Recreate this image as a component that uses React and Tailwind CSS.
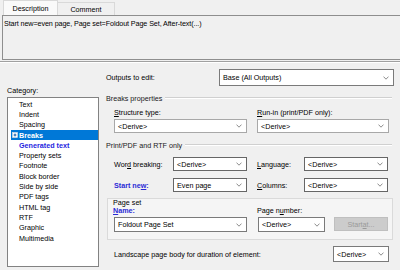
import clsx from "clsx";

const Chevron = () => (
  <svg width="6" height="4" viewBox="0 0 6 4" className="shrink-0">
    <polyline points="0.5,0.6 3,3.2 5.5,0.6" fill="none" stroke="#707070" strokeWidth="0.8" />
  </svg>
);

const Select = ({ value, className }) => (
  <div
    className={clsx(
      "flex shrink-0 items-center justify-between border border-[#7a7a7a] bg-white pl-[3px] pr-[4px]",
      className,
    )}
  >
    <span className="whitespace-nowrap">{value}</span>
    <Chevron />
  </div>
);

const GroupHeader = ({ children, className }) => (
  <div className={clsx("flex h-[10px] items-center", className)}>
    <span className="whitespace-nowrap text-[#1a1a1a]">{children}</span>
    <div className="ml-[3px] mr-[2px] flex-1 border-t border-[#d0d0d0] border-b border-b-white" />
  </div>
);

const categories = [
  { name: "Text" },
  { name: "Indent" },
  { name: "Spacing" },
  { name: "Breaks", selected: true },
  { name: "Generated text", blue: true },
  { name: "Property sets" },
  { name: "Footnote" },
  { name: "Block border" },
  { name: "Side by side" },
  { name: "PDF tags" },
  { name: "HTML tag" },
  { name: "RTF" },
  { name: "Graphic" },
  { name: "Multimedia" },
];

export default function App() {
  return (
    <div
      className="h-[270px] w-[400px] overflow-hidden bg-[#f0f0f0] text-[7.2px] leading-[9px] text-black"
      style={{ fontFamily: '"Liberation Sans", Arial, sans-serif' }}
    >
      {/* tabs */}
      <div className="flex h-[15px] items-end pl-[3px]">
        <div className="flex h-[15px] w-[55px] items-center justify-center border border-b-0 border-[#d9d9d9] bg-[#fafafa]">
          Description
        </div>
        <div className="flex h-[13px] w-[57px] items-center justify-center border border-b-0 border-l-0 border-[#d9d9d9] bg-[#f0f0f0]">
          Comment
        </div>
      </div>

      {/* description box */}
      <div className="ml-[2px] h-[45px] border border-r-0 border-[#8e8e8e] pl-[1px] pt-[3px]">
        <span className="whitespace-nowrap tracking-[-0.1px]">
          Start new=even page, Page set=Foldout Page Set, After-text(...)
        </span>
      </div>
      <div className="mt-[1px] h-px bg-[#a0a0a0]" />
      <div className="h-px bg-white" />

      <div className="flex">
        {/* left column */}
        <div className="ml-[7px] w-[92px]">
          <div className="mt-[23px] h-[9px]">Category:</div>
          <div className="mt-[2px] h-[170px] border border-[#828282] bg-white pt-px pl-[3px]">
            {categories.map((c) => (
              <div
                key={c.name}
                className={clsx(
                  "flex h-[10.3px] items-center",
                  c.selected && "bg-[#0078d7] font-bold text-white",
                  c.blue && "font-bold text-[#1f1fe0]",
                )}
              >
                <div className="flex w-[8px] justify-center">
                  {c.selected && (
                    <svg width="6" height="6" viewBox="0 0 6 6">
                      <rect x="0.5" y="0.5" width="5" height="5" fill="#fff" stroke="#e0e0e0" strokeWidth="0.6" />
                      <path d="M1.6 3H4.4M3 1.6V4.4" stroke="#0050a0" strokeWidth="0.9" />
                    </svg>
                  )}
                </div>
                <span className="whitespace-nowrap">{c.name}</span>
              </div>
            ))}
          </div>
        </div>

        {/* right column */}
        <div className="ml-[7px] w-[288px]">
          <div className="mt-[6px] flex h-[17px] items-center">
            <span>Outputs to edit:</span>
            <Select value="Base (All Outputs)" className="ml-auto h-[17px] w-[175px]" />
          </div>

          <GroupHeader className="mt-[7px]">Breaks properties</GroupHeader>

          <div className="ml-[8px] mt-[5px] flex">
            <div className="w-[143px]">
              <div className="h-[9px]">
                <span className="underline">S</span>tructure type:
              </div>
              <Select value="<Derive>" className="mt-[2px] h-[14px] w-[133px] border-[#a8a8a8]" />
            </div>
            <div>
              <div className="h-[9px]">
                <span className="underline">R</span>un-in (print/PDF only):
              </div>
              <Select value="<Derive>" className="mt-[2px] h-[14px] w-[132px] border-[#a8a8a8]" />
            </div>
          </div>

          <GroupHeader className="mt-[7px]">Print/PDF and RTF only</GroupHeader>

          <div className="ml-[8px] mt-[7px] flex h-[14px] items-center">
            <span className="w-[59px]">
              Wor<span className="underline">d</span> breaking:
            </span>
            <Select value="<Derive>" className="h-[14px] w-[74px] border-[#666]" />
            <span className="ml-[10px] w-[47px]">
              <span className="underline">L</span>anguage:
            </span>
            <Select value="<Derive>" className="h-[14px] w-[84px] border-[#666]" />
          </div>

          <div className="ml-[8px] mt-[7px] flex h-[14px] items-center">
            <span className="w-[59px] font-bold text-[#2b2bd6]">
              Start ne<span className="underline">w</span>:
            </span>
            <Select value="Even page" className="h-[14px] w-[74px] border-[#666]" />
            <span className="ml-[10px] w-[47px]">
              <span className="underline">C</span>olumns:
            </span>
            <Select value="<Derive>" className="h-[14px] w-[84px] border-[#666]" />
          </div>

          <div className="ml-px mt-[6px] h-[42px] w-[286px] border border-[#dadada] bg-[#f5f5f5] pl-[5px]">
            <div className="h-[8px] leading-[8px]">Page set</div>
            <div className="flex h-[8px] leading-[8px]">
              <span className="w-[144px] font-bold text-[#2b2bd6]">
                <span className="underline">N</span>ame:
              </span>
              <span>
                Page n<span className="underline">u</span>mber:
              </span>
            </div>
            <div className="mt-[2px] flex">
              <Select value="Foldout Page Set" className="ml-px h-[15px] w-[133px]" />
              <Select value="<Derive>" className="ml-[11px] h-[15px] w-[67px]" />
              <div className="ml-[9px] flex h-[14px] w-[54px] items-center justify-center border border-[#bfbfbf] bg-[#cccccc] text-[#9a9a9a]">
                Start <span className="underline">a</span>t...
              </div>
            </div>
          </div>

          <div className="ml-[8px] mt-[6px] flex h-[16px] items-center">
            <span>Landscape page body for duration of element:</span>
            <Select value="<Derive>" className="ml-auto mr-[5px] h-[16px] w-[56px]" />
          </div>
        </div>
      </div>
    </div>
  );
}
